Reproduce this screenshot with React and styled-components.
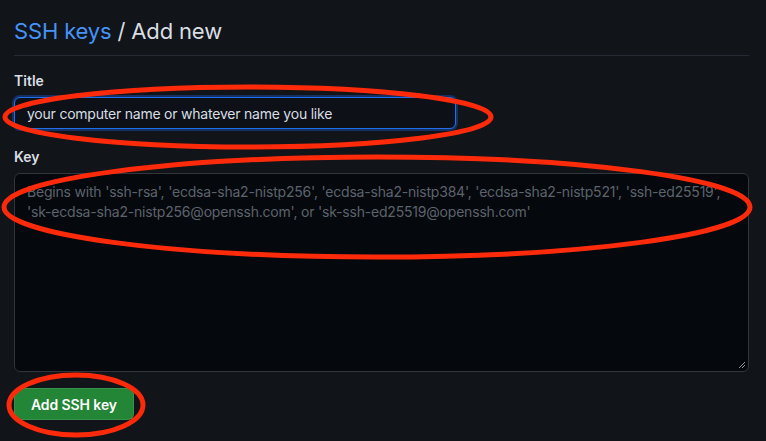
import React from "react";
import styled, { createGlobalStyle } from "styled-components";

const Global = createGlobalStyle`
  html, body { margin: 0; padding: 0; background: #111418; }
  body { font-family: Inter, "Noto Sans", "Liberation Sans", sans-serif; color: #d8dee4; }
  * { box-sizing: border-box; }
`;

const Page = styled.div`
  position: relative;
  width: 766px;
  height: 441px;
  overflow: hidden;
  background: #111418;
  padding: 13px 17px 0 14px;
`;

const Header = styled.div`
  display: flex;
  align-items: center;
  height: 36px;
  padding-bottom: 6px;
  font-size: 22px;
  font-weight: 400;
  line-height: 36px;
  letter-spacing: -0.15px;
  color: #d8dee4;
  border-bottom: 1px solid #262b33;
  box-sizing: content-box;
`;

const Crumb = styled.a`
  color: #4493f8;
  text-decoration: none;
`;

const Sep = styled.span`
  margin: 0 6px;
`;

const Form = styled.div`
  display: flex;
  flex-direction: column;
  padding-top: 15px;
`;

const Field = styled.div`
  display: flex;
  flex-direction: column;
  margin-bottom: ${(p) => p.$mb || 0}px;
`;

const Label = styled.label`
  font-size: 14px;
  font-weight: 600;
  line-height: 20px;
  color: #d8dee4;
  margin-bottom: 6px;
`;

const TextInput = styled.div`
  width: 442px;
  height: 32px;
  display: flex;
  align-items: center;
  padding: 0 12px;
  font-size: 14px;
  letter-spacing: -0.22px;
  color: #d8dee4;
  background: #0d1117;
  border: 1px solid #1f6feb;
  border-radius: 6px;
  box-shadow: 0 0 0 2px #143063;
`;

const TextArea = styled.div`
  position: relative;
  width: 735px;
  height: 199px;
  padding: 8px 12px;
  font-size: 14px;
  line-height: 20px;
  letter-spacing: -0.2px;
  white-space: nowrap;
  color: #5c636c;
  background: #05080c;
  border: 1px solid #30363d;
  border-radius: 6px;
`;

const Grip = styled.svg`
  position: absolute;
  right: 2px;
  bottom: 2px;
`;

const Button = styled.button`
  align-self: flex-start;
  height: 32px;
  padding: 0 16px;
  font-family: inherit;
  font-size: 14px;
  font-weight: 600;
  letter-spacing: -0.1px;
  color: #ffffff;
  background: #238636;
  border: 1px solid rgba(240, 246, 252, 0.1);
  border-radius: 6px;
  margin-top: 16px;
`;

const Overlay = styled.svg`
  position: absolute;
  left: 0;
  top: 0;
  pointer-events: none;
`;

export default function App() {
  return (
    <Page>
      <Global />
      <Header>
        <Crumb href="#">SSH keys</Crumb>
        <Sep>/</Sep>
        <span>Add new</span>
      </Header>
      <Form>
        <Field $mb={18}>
          <Label>Title</Label>
          <TextInput>your computer name or whatever name you like</TextInput>
        </Field>
        <Field>
          <Label>Key</Label>
          <TextArea>
            Begins with 'ssh-rsa', 'ecdsa-sha2-nistp256', 'ecdsa-sha2-nistp384', 'ecdsa-sha2-nistp521', 'ssh-ed25519',
            <br />
            'sk-ecdsa-sha2-nistp256@openssh.com', or 'sk-ssh-ed25519@openssh.com'
            <Grip width="8" height="8" viewBox="0 0 8 8">
              <path d="M1 7 L7 1 M4 7 L7 4" stroke="#8b949e" strokeWidth="1" />
            </Grip>
          </TextArea>
        </Field>
        <Button>Add SSH key</Button>
      </Form>
      <Overlay width="766" height="441" viewBox="0 0 766 441">
        <g fill="none" stroke="#ff2a0a" strokeWidth="5">
          <ellipse cx="248" cy="117" rx="243" ry="30" />
          <ellipse cx="377" cy="207" rx="373" ry="50" />
          <ellipse cx="76" cy="405" rx="67" ry="30" />
        </g>
      </Overlay>
    </Page>
  );
}
